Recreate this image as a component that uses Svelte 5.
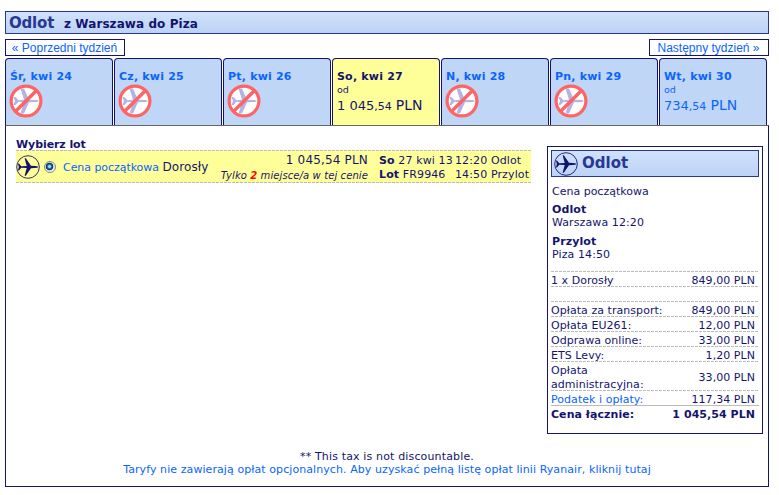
<script lang="ts">
  type Day = { label: string; whole?: string; cents?: string; selected?: boolean };

  const days: Day[] = [
    { label: 'Śr, kwi 24' },
    { label: 'Cz, kwi 25' },
    { label: 'Pt, kwi 26' },
    { label: 'So, kwi 27', whole: '1 045', cents: ',54', selected: true },
    { label: 'N, kwi 28' },
    { label: 'Pn, kwi 29' },
    { label: 'Wt, kwi 30', whole: '734', cents: ',54' }
  ];

  const fees = [
    { name: 'Opłata za transport:', amount: '849,00 PLN' },
    { name: 'Opłata EU261:', amount: '12,00 PLN' },
    { name: 'Odprawa online:', amount: '33,00 PLN' },
    { name: 'ETS Levy:', amount: '1,20 PLN' },
    { name: 'Opłata administracyjna:', amount: '33,00 PLN', tall: true },
    { name: 'Podatek i opłaty:', amount: '117,34 PLN', link: true }
  ];
</script>

{#snippet plane()}
  <svg class="plane" viewBox="0 0 24 24" aria-hidden="true">
    <circle cx="12" cy="12" r="11.3" fill="none" stroke="currentColor" stroke-width="0.9" />
    <path
      fill="currentColor"
      d="M22.5 12 Q21.5 12.9 19 13 L15 13.2 L9.8 20.8 H8.6 L10.7 13.1 L5.2 12.7 L3 15.4 H2 L2.8 12 L2 8.6 H3 L5.2 11.3 L10.7 10.9 L8.6 3.2 H9.8 L15 10.8 L19 11 Q21.5 11.1 22.5 12 Z"
    />
  </svg>
{/snippet}

{#snippet noFlight()}
  <svg class="no-flight" viewBox="0 0 34 34" aria-hidden="true">
    <circle cx="17" cy="17" r="14.8" fill="#fff" />
    <path
      fill="#b3b3e6"
      d="M30 17 L28 18 L20 18.3 L15 29.5 H11.5 L15 18.2 L9.5 17.8 L6.5 21 H4.5 L6 17 L4.5 13 H6.5 L9.5 16.2 L15 15.8 L11.5 4.5 H15 L20 15.7 L28 16 Z"
    />
    <circle cx="17" cy="17" r="14.9" fill="none" stroke="#ff6464" stroke-width="3.2" />
    <path d="M27.3 6.7 L6.7 27.3" stroke="#ff6464" stroke-width="3.4" />
  </svg>
{/snippet}

<main class="page">
  <!-- Route heading -->
  <header class="bar route">
    <h1>Odlot</h1>
    <h2>z Warszawa do Piza</h2>
  </header>

  <nav class="weeks">
    <button class="week">« Poprzedni tydzień</button>
    <button class="week next">Następny tydzień »</button>
  </nav>

  <!-- Day tabs -->
  <div class="days">
    {#each days as day}
      <div class="day" class:selected={day.selected}>
        <div class="date">{day.label}</div>
        {#if day.whole}
          <div class="from">od</div>
          <div class="fare">{day.whole}<small>{day.cents}</small> <span>PLN</span></div>
        {:else}
          {@render noFlight()}
        {/if}
      </div>
    {/each}
  </div>

  <section class="panel">
    <div class="columns">
      <div class="flights">
        <h3>Wybierz lot</h3>
        <div class="flight">
          {@render plane()}
          <span class="radio"></span>
          <div class="kind"><a href="#fare">Cena początkowa</a> <span>Dorosły</span></div>
          <div class="cost">
            <div class="sum">1 045,54 PLN</div>
            <div class="seats">Tylko <b>2</b> miejsce/a w tej cenie</div>
          </div>
          <div class="number">
            <div><b>So</b> 27 kwi 13</div>
            <div><b>Lot</b> FR9946</div>
          </div>
          <div class="times">
            <div>12:20 Odlot</div>
            <div>14:50 Przylot</div>
          </div>
        </div>
      </div>

      <!-- Price summary -->
      <aside class="summary">
        <div class="bar head">
          {@render plane()}
          <span>Odlot</span>
        </div>
        <p class="fare-name">Cena początkowa</p>
        <p class="stop"><b>Odlot</b><br />Warszawa 12:20</p>
        <p class="stop"><b>Przylot</b><br />Piza 14:50</p>
        <div class="rows">
          <div class="row"><span>1 x Dorosły</span><span class="amount">849,00 PLN</span></div>
          <div class="row"></div>
          {#each fees as fee}
            <div class="row" class:tall={fee.tall}>
              {#if fee.link}
                <a href="#tax">{fee.name}</a>
              {:else}
                <span>{fee.name}</span>
              {/if}
              <span class="amount">{fee.amount}</span>
            </div>
          {/each}
          <div class="row total"><span>Cena łącznie:</span><span class="amount">1 045,54 PLN</span></div>
        </div>
      </aside>
    </div>

    <footer>
      <div class="tax">** This tax is not discountable.</div>
      <a href="#fees">Taryfy nie zawierają opłat opcjonalnych. Aby uzyskać pełną listę opłat linii Ryanair, kliknij tutaj</a>
    </footer>
  </section>
</main>

<style>
  :global(body) {
    background: #fff;
  }

  .page {
    --dashes: repeating-linear-gradient(90deg, #bbb 0 3px, transparent 3px 4px);
    box-sizing: border-box;
    width: 779px;
    height: 495px;
    padding: 11px 10px 0 5px;
    overflow: hidden;
    color: #14146e;
    font-family: Verdana, 'DejaVu Sans', sans-serif;
    font-size: 11px;
    line-height: 13px;
  }

  .page * {
    box-sizing: border-box;
  }

  h1,
  h2,
  h3,
  p {
    margin: 0;
  }

  a {
    color: #0a64ff;
    text-decoration: none;
  }

  .bar {
    display: flex;
    border: 1px solid #283796;
    background: linear-gradient(#d0e2fb, #bdd3f5);
  }

  /* Route heading */

  .route {
    height: 23px;
    padding-left: 3px;
    align-items: center;
  }

  h1 {
    width: 55px;
    padding-top: 1px;
    color: #283796;
    font-size: 15px;
    line-height: 21px;
    letter-spacing: -0.2px;
  }

  h2 {
    padding-top: 3px;
    font-size: 12px;
    letter-spacing: 0.08px;
  }

  .weeks {
    display: flex;
    justify-content: space-between;
    margin-top: 5px;
  }

  .week {
    width: 120px;
    height: 17px;
    padding: 1px 1px 0 0;
    border: 1px solid #14146e;
    background: #fff;
    color: #0a64ff;
    font: 12px/14px 'Liberation Sans', Arial, sans-serif;
    white-space: nowrap;
  }

  /* Day tabs */

  .days {
    display: flex;
    gap: 1px;
    margin-top: 2px;
  }

  .day {
    width: 108px;
    height: 67px;
    padding: 11px 0 0 4px;
    border: 1px solid #14146e;
    border-bottom: 0;
    border-radius: 4px 4px 0 0;
    background: #bfd6f6;
    color: #0a64ff;
  }

  .day.selected {
    background: #ffff99;
    color: #14146e;
  }

  .date {
    font-weight: bold;
    letter-spacing: 0.2px;
  }

  .no-flight {
    display: block;
    width: 34px;
    height: 34px;
    margin: 1px 0 0 -1px;
  }

  .from {
    font-size: 9.5px;
    line-height: 14px;
  }

  .fare {
    font-size: 13px;
    line-height: 17px;
    white-space: nowrap;
  }

  .fare small {
    font-size: 11px;
  }

  .fare span {
    font-size: 14px;
  }

  /* Panel */

  .panel {
    width: 764px;
    height: 362px;
    border: 1px solid #14146e;
    border-top-color: #666;
  }

  .columns {
    display: flex;
    justify-content: space-between;
    height: 324px;
    padding: 11px 5px 0 10px;
  }

  h3 {
    height: 13px;
    font-size: 11px;
    line-height: 15px;
    letter-spacing: -0.08px;
  }

  .flight {
    display: flex;
    align-items: center;
    width: 515px;
    height: 33px;
    background:
      var(--dashes) 0 0 / 100% 1px no-repeat,
      var(--dashes) 0 100% / 100% 1px no-repeat,
      #ffff99;
    white-space: nowrap;
  }

  .plane {
    flex: none;
    width: 24px;
    height: 24px;
  }

  .radio {
    width: 12px;
    height: 12px;
    margin-left: 4px;
    border: 1px solid #888;
    border-radius: 50%;
    background: radial-gradient(circle at 45% 45%, #8fe0f5 0 1px, #1b6a95 2.2px, #0b2d50 3.4px, #eee 4.2px);
  }

  .kind {
    width: 153px;
    margin-left: 7px;
    padding-top: 1px;
    letter-spacing: -0.05px;
  }

  .kind span {
    font-size: 12px;
    letter-spacing: 0.1px;
  }

  .cost {
    width: 152px;
    padding-top: 2px;
    text-align: right;
  }

  .sum {
    font-size: 12px;
    line-height: 15px;
    letter-spacing: 0.17px;
  }

  .seats {
    font-size: 10px;
    font-style: italic;
    line-height: 15px;
    letter-spacing: 0.1px;
  }

  .seats b {
    color: #f00;
  }

  .number,
  .times {
    padding-top: 2px;
    line-height: 14px;
    letter-spacing: 0.12px;
  }

  .number {
    width: 76px;
    margin-left: 11px;
  }

  /* Price summary */

  .summary {
    width: 216px;
    height: 288px;
    margin-top: 9px;
    padding: 3px;
    border: 1px solid #14146e;
  }

  .head {
    height: 27px;
    padding-left: 2px;
    align-items: center;
    gap: 4px;
    color: #14146e;
  }

  .head span {
    color: #283796;
    font-size: 15px;
    font-weight: bold;
  }

  .fare-name {
    margin: 8px 0 5px 1px;
  }

  .stop {
    margin: 0 0 6px 1px;
    letter-spacing: 0.1px;
  }

  .rows {
    margin-top: 10px;
    padding-top: 1px;
    background: var(--dashes) 0 0 / 100% 1px no-repeat;
  }

  .row {
    display: flex;
    justify-content: space-between;
    align-items: flex-start;
    height: 15px;
    padding: 2px 4px 0 0;
    background: var(--dashes) 0 100% / 100% 1px no-repeat;
    line-height: 14px;
    letter-spacing: 0.05px;
  }

  .row.tall {
    height: 29px;
    padding-top: 2px;
    align-items: center;
  }

  .row.tall span:first-child {
    width: 100px;
  }

  .row:nth-last-child(2) {
    background: none;
    border-bottom: 1px solid #bbb;
  }

  .row.total {
    background: none;
    font-weight: bold;
  }

  .amount {
    white-space: nowrap;
  }

  footer {
    text-align: center;
    white-space: nowrap;
    letter-spacing: 0.08px;
  }

  .tax {
    letter-spacing: 0.15px;
  }
</style>
